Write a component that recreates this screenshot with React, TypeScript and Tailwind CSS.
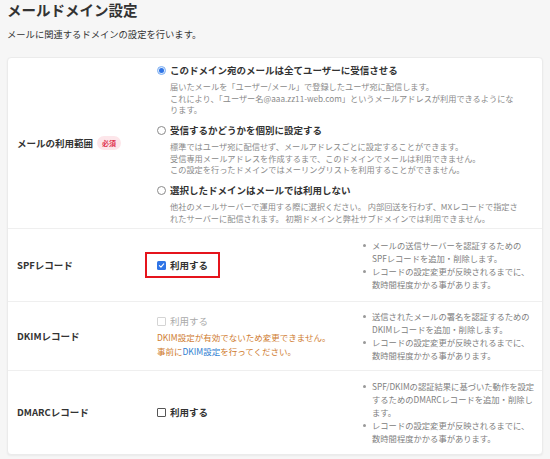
import React from 'react';

const radios = [
  {
    title: 'このドメイン宛のメールは全てユーザーに受信させる',
    checked: true,
    lines: [
      '届いたメールを「ユーザー/メール」で登録したユーザ宛に配信します。',
      'これにより、「ユーザー名@aaa.zz11-web.com」というメールアドレスが利用できるようにな',
      'ります。',
    ],
  },
  {
    title: '受信するかどうかを個別に設定する',
    checked: false,
    lines: [
      '標準ではユーザ宛に配信せず、メールアドレスごとに設定することができます。',
      '受信専用メールアドレスを作成するまで、このドメインでメールは利用できません。',
      'この設定を行ったドメインではメーリングリストを利用することができません。',
    ],
  },
  {
    title: '選択したドメインはメールでは利用しない',
    checked: false,
    lines: [
      '他社のメールサーバーで運用する際に選択ください。 内部回送を行わず、MXレコードで指定さ',
      'れたサーバーに配信されます。 初期ドメインと弊社サブドメインでは利用できません。',
    ],
  },
];

function Radio({ checked }: { checked: boolean }) {
  if (checked) {
    return (
      <span className="w-[9px] h-[9px] rounded-full border border-[#7fb0f2] bg-[#dbe9fc] flex items-center justify-center shrink-0">
        <span className="w-[5px] h-[5px] rounded-full bg-[#2f74e6]" />
      </span>
    );
  }
  return <span className="w-[9px] h-[9px] rounded-full border border-[#8a8a8a] bg-white shrink-0" />;
}

function Checkbox({ state }: { state: 'on' | 'off' | 'disabled' }) {
  if (state === 'on') {
    return (
      <span className="w-[9px] h-[9px] rounded-[1.5px] bg-[#2f74e6] flex items-center justify-center shrink-0">
        <svg width="7" height="7" viewBox="0 0 10 10">
          <path d="M2 5.2 L4.2 7.3 L8.2 2.6" fill="none" stroke="white" strokeWidth="1.6" strokeLinecap="round" strokeLinejoin="round" />
        </svg>
      </span>
    );
  }
  return (
    <span
      className={`w-[9px] h-[9px] rounded-[1px] border bg-white shrink-0 ${
        state === 'disabled' ? 'border-[#d4d4d4]' : 'border-[#555]'
      }`}
    />
  );
}

function Notes({ items }: { items: string[][] }) {
  return (
    <div className="flex-1 pl-[7px] flex flex-col justify-center text-[8.3px] leading-[13px] text-[#808080]">
      {items.map((lines, i) => (
        <div key={i} className="flex">
          <span className="w-[10px] shrink-0 pt-[5px]">
            <span className="block w-[3px] h-[3px] rounded-full bg-[#999] ml-[1px]" />
          </span>
          <div>
            {lines.map((l) => (
              <div key={l} className="whitespace-nowrap">{l}</div>
            ))}
          </div>
        </div>
      ))}
    </div>
  );
}

export default function App() {
  return (
    <div className="min-h-screen bg-[#f6f6f6] px-[7px] text-[#333] font-['Noto_Sans_CJK_JP','Noto_Sans',sans-serif]">
      {/* Header */}
      <h1 className="text-[14.5px] leading-[20px] font-bold">メールドメイン設定</h1>
      <p className="mt-[7px] text-[9.3px] leading-[14px]">メールに関連するドメインの設定を行います。</p>

      {/* Card */}
      <div className="mt-[16px] bg-white border border-[#ebebeb] rounded-[4px] shadow-[0_1px_2px_rgba(0,0,0,0.05)]">
        {/* Mail scope */}
        <div className="flex border-b border-[#efefef]">
          <div className="w-[137px] shrink-0 pl-[9px] flex items-center gap-[4px]">
            <span className="text-[9.5px] font-bold">メールの利用範囲</span>
            <span className="px-[5px] h-[14px] rounded-full bg-[#fde6ea] text-[#e0344f] text-[7px] font-bold leading-[14px]">必須</span>
          </div>
          <div className="flex-1 pl-[12px] pt-[5px] pb-[4px] flex flex-col gap-[7.5px]">
            {radios.map((r) => (
              <div key={r.title}>
                <div className="flex items-center gap-[4px] h-[14px]">
                  <Radio checked={r.checked} />
                  <span className="text-[9.5px] font-bold leading-[14px]">{r.title}</span>
                </div>
                <div className="mt-[4px] pl-[13px] text-[8.2px] leading-[11.5px] text-[#8a8a8a]">
                  {r.lines.map((l) => (
                    <div key={l} className="whitespace-nowrap">{l}</div>
                  ))}
                </div>
              </div>
            ))}
          </div>
        </div>

        {/* SPF */}
        <div className="flex border-b border-[#efefef] py-[10px]">
          <div className="w-[137px] shrink-0 pl-[9px] flex items-center text-[9.5px] font-bold">SPFレコード</div>
          <div className="w-[210px] shrink-0 flex items-center">
            <div className="h-[26px] px-[10px] border-2 border-[#e5141c] flex items-center gap-[4px]">
              <Checkbox state="on" />
              <span className="text-[9.5px] font-bold">利用する</span>
            </div>
          </div>
          <Notes
            items={[
              ['メールの送信サーバーを認証するための', 'SPFレコードを追加・削除します。'],
              ['レコードの設定変更が反映されるまでに、', '数時間程度かかる事があります。'],
            ]}
          />
        </div>

        {/* DKIM */}
        <div className="flex border-b border-[#efefef] py-[8px]">
          <div className="w-[137px] shrink-0 pl-[9px] flex items-center text-[9.5px] font-bold">DKIMレコード</div>
          <div className="w-[210px] shrink-0 pl-[12px] flex flex-col justify-center">
            <div className="flex items-center gap-[4px] h-[14px]">
              <Checkbox state="disabled" />
              <span className="text-[9.5px] text-[#aaa]">利用する</span>
            </div>
            <div className="mt-[1px] text-[8.5px] leading-[14px] text-[#cf7c30] whitespace-nowrap">
              <div>DKIM設定が有効でないため変更できません。</div>
              <div>
                事前に<span className="text-[#2e7dd1]">DKIM設定</span>を行ってください。
              </div>
            </div>
          </div>
          <Notes
            items={[
              ['送信されたメールの署名を認証するための', 'DKIMレコードを追加・削除します。'],
              ['レコードの設定変更が反映されるまでに、', '数時間程度かかる事があります。'],
            ]}
          />
        </div>

        {/* DMARC */}
        <div className="flex py-[9px]">
          <div className="w-[137px] shrink-0 pl-[9px] flex items-center text-[9.5px] font-bold">DMARCレコード</div>
          <div className="w-[210px] shrink-0 pl-[12px] flex items-center gap-[4px]">
            <Checkbox state="off" />
            <span className="text-[9.5px] font-bold">利用する</span>
          </div>
          <Notes
            items={[
              ['SPF/DKIMの認証結果に基づいた動作を設定', 'するためのDMARCレコードを追加・削除し', 'ます。'],
              ['レコードの設定変更が反映されるまでに、', '数時間程度かかる事があります。'],
            ]}
          />
        </div>
      </div>
    </div>
  );
}
